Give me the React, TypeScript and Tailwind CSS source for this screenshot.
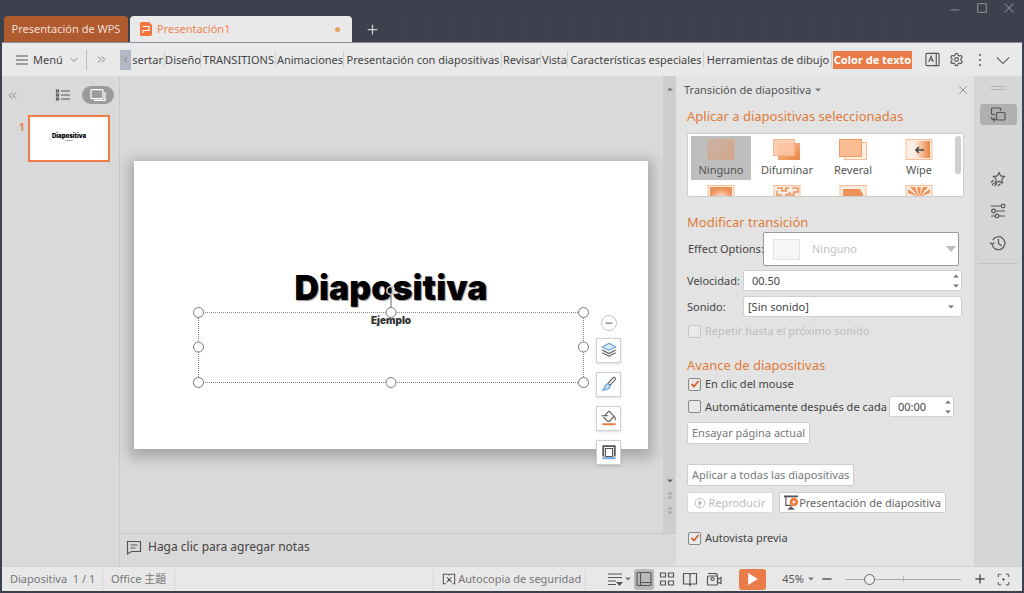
import { useState } from 'react';
import type { ReactNode } from 'react';
import { ChevronDown, ChevronLeft, ChevronsLeft, ChevronsRight, Minus, Plus, Settings, X } from 'lucide-react';

// ========================================
// DATA
// ========================================

interface MenuTab {
  label: string;
  width: string;
}

const menuTabs: MenuTab[] = [
  { label: 'Diseño', width: 'w-9' },
  { label: 'TRANSITIONS', width: 'w-[75px]' },
  { label: 'Animaciones', width: 'w-[68px]' },
  { label: 'Presentación con diapositivas', width: 'w-[158px]' },
  { label: 'Revisar', width: 'w-[39px]' },
  { label: 'Vista', width: 'w-[27px]' },
  { label: 'Características especiales', width: 'w-[136px]' },
  { label: 'Herramientas de dibujo', width: 'w-[128px]' },
];

const transitions = ['Ninguno', 'Difuminar', 'Reveral', 'Wipe'];

// ========================================
// ICONS
// ========================================

interface IconProps {
  children: ReactNode;
  size?: string;
  box?: string;
  color?: string;
}

function Icon({ children, size = 'size-4', box = '0 0 16 16', color = 'text-[#555]' }: IconProps) {
  return (
    <svg viewBox={box} className={`${size} ${color} shrink-0`} fill="none" stroke="currentColor" strokeWidth="1.2" aria-hidden="true">
      {children}
    </svg>
  );
}

function Caret({ up = false, color = 'text-[#777]' }: { up?: boolean; color?: string }) {
  return (
    <svg viewBox="0 0 6 4" className={`h-1 w-1.5 shrink-0 ${color}`} fill="currentColor" aria-hidden="true">
      <path d={up ? 'M0 3.500 3 .5l3 3z' : 'M0 .5h6l-3 3z'} />
    </svg>
  );
}

function TransitionIcon({ name }: { name: string }) {
  return (
    <svg viewBox="0 0 28 22" className="h-[22px] w-7" fill="none" aria-hidden="true">
      <defs>
        <linearGradient id="warm" x1="0" x2="1" y1="0" y2="1">
          <stop offset="0" stopColor="#fbc4a0" />
          <stop offset="1" stopColor="#e98442" />
        </linearGradient>
        <linearGradient id="wipe">
          <stop offset=".3" stopColor="#fdeee4" />
          <stop offset="1" stopColor="#ea8443" />
        </linearGradient>
        <linearGradient id="muted" x1="0" x2="1" y1="0" y2="1">
          <stop offset="0" stopColor="#c9b5a7" />
          <stop offset="1" stopColor="#d3a488" />
        </linearGradient>
      </defs>
      {name === 'Ninguno' && <rect x="1" y=".5" width="26" height="20" fill="url(#muted)" stroke="#dba685" strokeDasharray="2 1" />}
      {name === 'Difuminar' && (
        <>
          <rect x="5" y="4" width="22" height="17" fill="url(#warm)" />
          <rect x=".5" y=".5" width="21" height="16" fill="#fbc7a6" fillOpacity=".85" stroke="#f4b48d" />
        </>
      )}
      {name === 'Reveral' && (
        <>
          <rect x="5.5" y="3.5" width="22" height="17" fill="#fdeee4" stroke="#f8bd97" />
          <rect x=".5" y=".5" width="22" height="17" fill="#fbbc93" stroke="#f09a66" />
        </>
      )}
      {name === 'Wipe' && (
        <>
          <rect x="1" y=".5" width="26" height="20" fill="#fdeee4" stroke="#f8bd97" />
          <rect x="3" y="2" width="22" height="17" fill="url(#wipe)" />
          <path d="M19 11h-8m3-3-3 3 3 3" stroke="#444" strokeWidth="1.6" />
        </>
      )}
    </svg>
  );
}

function HiddenRowIcon({ index }: { index: number }) {
  return (
    <svg viewBox="0 0 28 22" className="h-[22px] w-7" fill="none" aria-hidden="true">
      <defs>
        <radialGradient id="glow" cy=".6">
          <stop offset="0" stopColor="#fde3d2" />
          <stop offset="1" stopColor="#ee9158" />
        </radialGradient>
      </defs>
      <rect x="1" y=".5" width="26" height="20" fill="#fdeee4" stroke="#f8bd97" />
      {index === 0 && <rect x="3" y="2" width="22" height="17" fill="url(#glow)" />}
      {index === 1 && <path d="M4 3h5v3h4V3h3m3 0h6v4h-4v3h-4V7M4 6v4h5m3 0h3V8" stroke="#ee9158" strokeWidth="1.5" />}
      {index === 2 && <path d="M4 4h17l3 5v10H4z" fill="#ee9158" />}
      {index === 3 && <path d="M14 12 3 8V4zM14 12 5 2h5zM14 12 12 2h4zM14 12 18 2h5zM14 12l11-8v4z" fill="#ee9158" />}
    </svg>
  );
}

// ========================================
// SHARED CONTROLS
// ========================================

interface CheckProps {
  id: string;
  label: string;
  defaultChecked?: boolean;
  disabled?: boolean;
}

function Check({ id, label, defaultChecked, disabled }: CheckProps) {
  return (
    <div className="flex h-5 items-center gap-1 pl-px whitespace-nowrap">
      <span className="grid place-items-center">
        <input
          id={id}
          type="checkbox"
          defaultChecked={defaultChecked}
          disabled={disabled}
          className="peer col-start-1 row-start-1 size-[13px] appearance-none rounded-xs border border-[#888] bg-[#e9e9e9] disabled:border-[#c5c5c5]"
        />
        <svg viewBox="0 0 10 10" className="pointer-events-none invisible col-start-1 row-start-1 size-2.5 peer-checked:visible" fill="none" stroke="#d4602a" strokeWidth="1.8" aria-hidden="true">
          <path d="m1.5 5 2.5 2.5L8.5 2" />
        </svg>
      </span>
      <label htmlFor={id} className={disabled ? 'text-[#bcbcbc]' : ''}>{label}</label>
    </div>
  );
}

function Spinner({ id, label, value, width }: { id: string; label: string; value: string; width: string }) {
  return (
    <div className={`flex h-[21px] items-center rounded-xs border border-[#cfcfcf] bg-white ${width}`}>
      <input id={id} aria-label={label} defaultValue={value} className="w-0 min-w-0 grow pl-2 outline-none" />
      <div className="flex w-2 flex-col gap-1.5">
        <button type="button" aria-label={`${label}: más`}><Caret up /></button>
        <button type="button" aria-label={`${label}: menos`}><Caret /></button>
      </div>
    </div>
  );
}

function PanelHeading({ children }: { children: ReactNode }) {
  return <h2 className="text-[13px] leading-5 text-[#e07b39]">{children}</h2>;
}

// ========================================
// WINDOW PARTS
// ========================================

function TitleBar() {
  return (
    <header className="flex h-[43px] items-end border-b border-[#8a8a9c] pl-0.5">
      <button type="button" className="h-[26px] w-[124px] rounded-t bg-[#b05a30] text-[#f0dfd6]">Presentación de WPS</button>
      <button type="button" className="ml-0.5 flex h-[26px] w-[222px] items-center gap-1 rounded-t bg-[#e9e9e9] pr-3 pl-[9px] text-[#ef8450]">
        <svg viewBox="0 0 14 16" className="h-4 w-3.5" fill="none" aria-hidden="true">
          <path d="M2.5 1H10l3 3v9a2 2 0 0 1-2 2H2.5A1.5 1.5 0 0 1 1 13.500v-11A1.500 1.500 0 0 1 2.500 1z" fill="#f2743d" />
          <path d="M3.500 5.500h6.500v4H4v2.500" stroke="#fff" strokeWidth="1.200" />
        </svg>
        <span className="grow text-left">Presentación1</span>
        <span className="size-[5px] rounded-full bg-[#e8a05a]" />
      </button>
      <button type="button" aria-label="Nueva pestaña" className="grid h-[26px] w-10 place-items-center text-[#d0d0d6]">
        <Plus size={15} strokeWidth={2} />
      </button>
      <div className="h-[30px] grow bg-[radial-gradient(#444753_0.5px,transparent_1px)] bg-[length:6px_10px]" />
      <div className="flex h-full items-start gap-[17px] pt-[3px] pr-2 pl-4 text-[#85858e]">
        <button type="button" aria-label="Minimizar"><Icon size="size-2.5" color=""><path d="M1 11h14" strokeWidth="1.800" /></Icon></button>
        <button type="button" aria-label="Maximizar"><Icon size="size-2.5" color=""><rect x="1" y="1" width="14" height="14" rx="1.500" strokeWidth="1.800" /></Icon></button>
        <button type="button" aria-label="Cerrar"><Icon size="size-2.5" color=""><path d="m1 1 14 14M15 1 1 15" strokeWidth="1.800" /></Icon></button>
      </div>
    </header>
  );
}

function MenuBar() {
  return (
    <nav className="flex h-[33px] items-center bg-[#e9e9e9] whitespace-nowrap">
      <button type="button" className="flex w-[84px] items-center gap-1 pl-[13px]">
        <Icon size="h-3 w-[14px]" box="0 0 14 12"><path d="M1 2h12M1 6h12M1 10h12" /></Icon>
        <span>Menú</span>
        <ChevronDown size={12} strokeWidth={1.800} className="ml-px text-[#777]" />
      </button>
      <button type="button" aria-label="Más accesos" className="flex h-5 w-[34px] items-center border-l border-[#bbb] pl-2 text-[#777]">
        <ChevronsRight size={13} strokeWidth={1.800} />
      </button>
      <button type="button" aria-label="Desplazar a la izquierda" className="grid h-5 w-[11px] place-items-center bg-[#b4b7c4] text-[#666]">
        <ChevronLeft size={9} />
      </button>
      <button type="button" className="ml-px flex h-[17px] w-[33px] items-center justify-end overflow-hidden border-r border-[#d0d0d0] pr-px">
        <span>Insertar</span>
      </button>
      {menuTabs.map((tab) => (
        <button key={tab.label} type="button" className={`flex h-[17px] items-center justify-center border-r border-[#d0d0d0] pl-px ${tab.width}`}>
          {tab.label}
        </button>
      ))}
      <button type="button" className="ml-px h-[18px] w-[79px] bg-[#e97c49] font-bold text-white">Color de texto</button>
      <div className="ml-auto flex items-center pr-3">
        <button type="button" aria-label="Panel de texto" className="mr-[9px]">
          <Icon size="size-[15px]">
            <rect x="1" y="1.500" width="14" height="13" rx="1" />
            <path d="M12 1.500v13M4 10.500l2.500-6 2.500 6M5 8.500h3" />
          </Icon>
        </button>
        <button type="button" aria-label="Configuración" className="mr-3.5 text-[#555]"><Settings size={15} strokeWidth={1.800} /></button>
        <button type="button" aria-label="Más" className="mr-3.5">
          <svg viewBox="0 0 4 14" className="h-3.5 w-1" fill="#555" aria-hidden="true">
            <circle cx="2" cy="2" r="1" /><circle cx="2" cy="7" r="1" /><circle cx="2" cy="12" r="1" />
          </svg>
        </button>
        <button type="button" aria-label="Ocultar cinta"><Icon size="size-3.5"><path d="m1 5 7 7 7-7" /></Icon></button>
      </div>
    </nav>
  );
}

function SlideList() {
  return (
    <aside className="w-[118px] shrink-0 border-r border-[#c9c9c9] bg-[#d9d9d9]">
      <div className="mt-2.5 flex items-center pl-1">
        <button type="button" aria-label="Contraer" className="text-[#777]"><ChevronsLeft size={13} strokeWidth={1.800} /></button>
        <button type="button" aria-label="Esquema" className="ml-9">
          <Icon size="h-3 w-4" box="0 0 16 12">
            <path d="M6 2h9M6 6h9M6 10h9" />
            <path d="M1.500 1h2v2h-2zM1.500 5h2v2h-2zM1.500 9h2v2h-2z" />
          </Icon>
        </button>
        <button type="button" aria-label="Diapositivas" className="ml-[11px] grid h-[18px] w-8 place-items-center rounded-full bg-[#9b9b9b]">
          <Icon size="h-3 w-4" box="0 0 16 12" color="text-white">
            <rect x="1" y=".6" width="12" height="9" rx="1" />
            <path d="M15 3v8.400H4" />
          </Icon>
        </button>
      </div>
      <div className="mt-[11px] flex pl-[17px]">
        <span className="w-[9px] pt-1 text-[10px] font-bold text-[#e97c49]">1</span>
        <button type="button" className="h-[47px] w-[82px] border-2 border-[#ee7c48] bg-white pb-1 text-black">
          <span className="block font-[Inter,sans-serif] text-[6px] leading-[7px] font-black">Diapositiva</span>
          <span className="block text-[2px] leading-[3px]">Ejemplo</span>
        </button>
      </div>
    </aside>
  );
}

const handles = [
  '-left-[6px] -top-[6px]',
  'left-1/2 -translate-x-1/2 -top-[6px]',
  '-right-[6px] -top-[6px]',
  '-left-[6px] top-1/2 -translate-y-1/2',
  '-right-[6px] top-1/2 -translate-y-1/2',
  '-left-[6px] -bottom-[6px]',
  'left-1/2 -translate-x-1/2 -bottom-[6px]',
  '-right-[6px] -bottom-[6px]',
];

function FloatingTool({ label, children }: { label: string; children: ReactNode }) {
  return (
    <button type="button" aria-label={label} className="grid size-[25px] place-items-center border border-[#d0d0d0] bg-white shadow">
      <Icon box="0 0 18 18" size="size-4">{children}</Icon>
    </button>
  );
}

function Slide() {
  return (
    <div className="relative aspect-[514/288] w-full bg-white pt-[107px] text-center text-black shadow-[0_4px_12px_5px_rgba(0,0,0,0.22)]">
      <h1 className="font-[Inter,sans-serif] text-[34px] leading-10 font-black text-shadow-[1px_1px_1px_#999]">Diapositiva</h1>
      <p className="mt-1.5 font-[Inter,sans-serif] text-[10px] leading-3 font-black text-[#333]">Ejemplo</p>

      {/* Selected text box */}
      <div className="absolute inset-x-16 top-[151px] bottom-[66px] border border-dotted border-[#888]">
        <svg viewBox="0 0 12 28" className="absolute bottom-full left-1/2 h-7 w-3 -translate-x-1/2" fill="none" aria-hidden="true">
          <path d="M6 9v19" stroke="#999" strokeWidth="1.500" />
          <path d="M9.500 7A4 4 0 1 1 9.500 4" stroke="#ccc" strokeWidth="1.600" />
          <path d="M8 6h4l-2 3z" fill="#ddd" />
        </svg>
        {handles.map((place) => (
          <span key={place} className={`absolute size-[11px] rounded-full border border-[#777] bg-white ${place}`} />
        ))}
      </div>

      {/* Quick tools beside the selection */}
      <div className="absolute top-[154px] right-[27px] flex flex-col items-center gap-[9px]">
        <button type="button" aria-label="Contraer herramientas" className="-mb-0.5 grid size-4 place-items-center rounded-full border border-[#c4c4c4] bg-white text-[#777]">
          <Minus size={10} strokeWidth={3} />
        </button>
        <FloatingTool label="Capas">
          <path d="m1.500 12 7.500 4 7.500-4" />
          <path d="m1.500 9 7.500 4 7.500-4" />
          <path d="M9 1.500 16.500 5.500 9 9.500 1.500 5.500z" fill="#d5e9f8" stroke="#5b9bd5" />
        </FloatingTool>
        <FloatingTool label="Pincel">
          <path d="M15.500 1.500c1 .8 1 1.800.3 2.700l-5.500 6.300-2.500-2L13.500 2c.6-.6 1.400-.8 2-.5z" />
          <path d="m7.800 8.500 2.500 2.200c0 3-3.500 5.300-8.300 5 2-1.200 1.800-2 2.500-4.200.7-1.800 1.800-2.800 3.300-3z" fill="#c5e0f5" stroke="#5b9bd5" />
        </FloatingTool>
        <FloatingTool label="Relleno">
          <path d="m4 6.500 4-4.500q1-1 2 0l4.500 5-4 5q-.5.500-1 .5h-2q-.5 0-1-.5L3 8M.5 6.500H8M14.500 7c1.500 1 1.800 2.500 1.500 4.500" />
          <path d="M1.500 16h15" stroke="#f07a3c" strokeWidth="2.200" />
        </FloatingTool>
        <FloatingTool label="Contorno">
          <path d="M2.500 14V2.500h13V14" strokeWidth="2" />
          <path d="M5 14V5h8v9z" />
          <path d="M1.500 16h15" stroke="#6fa5d8" strokeWidth="2.200" />
        </FloatingTool>
      </div>
    </div>
  );
}

function Canvas() {
  return (
    <main className="flex min-w-0 grow flex-col bg-[#d9d9d9]">
      <div className="flex grow">
        <div className="flex min-w-0 grow items-center pr-[15px] pl-3.5">
          <Slide />
        </div>
        <div className="flex w-[13px] shrink-0 flex-col items-center bg-[#cecece] pt-[11px] pb-[18px]">
          <Caret up />
          <div className="mt-auto flex flex-col items-center gap-2">
            <Caret color="text-[#666]" />
            <span className="flex flex-col"><Caret up color="text-[#aaa]" /><Caret up color="text-[#aaa]" /></span>
            <span className="flex flex-col"><Caret color="text-[#aaa]" /><Caret color="text-[#aaa]" /></span>
          </div>
        </div>
      </div>
      <button type="button" className="flex h-[33px] items-center gap-1.5 border-t border-[#c6c6c6] pb-1.5 pl-1.5 text-xs">
        <Icon>
          <path d="M1.500 2.500h13v10h-9l-4 2.500z" />
          <path d="M4.500 6h7M4.500 9h5" />
        </Icon>
        Haga clic para agregar notas
      </button>
    </main>
  );
}

function TransitionPanel() {
  const [selected, setSelected] = useState('Ninguno');

  return (
    <section className="w-[298px] shrink-0 bg-[#e3e3e3] pr-2.5 pl-[11px]">
      <div className="flex h-7 items-center justify-between text-[#555]">
        <button type="button" className="-ml-[3px] flex items-center gap-1">Transición de diapositiva <Caret /></button>
        <button type="button" aria-label="Cerrar panel" className="-mr-1.5 text-[#888]"><X size={14} strokeWidth={1.500} /></button>
      </div>

      <div className="mt-0.5"><PanelHeading>Aplicar a diapositivas seleccionadas</PanelHeading></div>
      <div className="mt-[7px] flex h-16 overflow-hidden rounded-xs border border-[#ccc] bg-white">
        <div className="grid grow grid-cols-4 content-start pt-0.5 pl-[3px]">
          {transitions.map((name) => (
            <button
              key={name}
              type="button"
              onClick={() => setSelected(name)}
              className={`mr-1.5 flex h-11 flex-col items-center pt-[3px] leading-[18px] text-[#555] ${selected === name ? 'bg-[#bebebe]' : ''}`}
            >
              <TransitionIcon name={name} />
              {name}
            </button>
          ))}
          {transitions.map((name, index) => (
            <span key={name} className="mr-1.5 flex justify-center pt-[5px]"><HiddenRowIcon index={index} /></span>
          ))}
        </div>
        <span className="mt-0.5 mr-0.5 h-[38px] w-1.5 rounded-full bg-[#cfcfcf]" />
      </div>

      <div className="mt-[15px]"><PanelHeading>Modificar transición</PanelHeading></div>
      <div className="flex items-center pr-[5px]">
        <span id="effect-label" className="w-[76px] shrink-0 pl-px whitespace-nowrap">Effect Options:</span>
        <button type="button" aria-labelledby="effect-label" disabled className="flex h-[34px] grow items-center rounded-xs border border-[#999] bg-white pr-0.5 pl-[9px] text-[#c2c2c2]">
          <span className="mr-3 h-[21px] w-[27px] border border-[#e3e3e3] bg-[#f6f6f6]" />
          <span className="grow text-left">Ninguno</span>
          <svg viewBox="0 0 10 6" className="h-1.5 w-2.5" fill="#bbb" aria-hidden="true"><path d="M0 0h10L5 6z" /></svg>
        </button>
      </div>
      <div className="mt-1 flex items-center pr-0.5">
        <label htmlFor="speed" className="w-14 shrink-0">Velocidad:</label>
        <Spinner id="speed" label="Velocidad" value="00.50" width="grow" />
      </div>
      <div className="mt-[5px] flex items-center pr-0.5">
        <label htmlFor="sound" className="w-14 shrink-0">Sonido:</label>
        <div className="grid grow items-center">
          <select id="sound" className="col-start-1 row-start-1 h-[21px] appearance-none rounded-[3px] border border-[#cfcfcf] bg-white pl-1">
            <option>[Sin sonido]</option>
          </select>
          <span className="pointer-events-none col-start-1 row-start-1 justify-self-end pr-2"><Caret /></span>
        </div>
      </div>
      <div className="mt-1"><Check id="repeat" label="Repetir hasta el próximo sonido" disabled /></div>

      <div className="mt-[14px]"><PanelHeading>Avance de diapositivas</PanelHeading></div>
      <div className="-mt-px"><Check id="on-click" label="En clic del mouse" defaultChecked /></div>
      <div className="mt-0.5 flex items-center justify-between pr-2.5">
        <Check id="auto" label="Automáticamente después de cada" />
        <Spinner id="after" label="Tiempo" value="00:00" width="w-[65px]" />
      </div>
      <button type="button" className="mt-[5px] block h-[22px] rounded-xs border border-[#ccc] bg-white px-1 text-[#777]">Ensayar página actual</button>

      <button type="button" className="mt-5 block h-[22px] rounded-xs border border-[#ccc] bg-white px-1 text-[#777]">Aplicar a todas las diapositivas</button>
      <div className="mt-1.5 flex gap-1.5 whitespace-nowrap">
        <button type="button" disabled className="flex h-[21px] w-[86px] items-center justify-center gap-0.5 rounded-xs border border-[#d8d8d8] bg-white text-[#bbb]">
          <Icon size="size-3" color="text-[#bbb]">
            <circle cx="8" cy="8" r="6.500" />
            <path d="M6.500 5v6l4-3z" fill="currentColor" />
          </Icon>
          Reproducir
        </button>
        <button type="button" className="flex h-[21px] w-[167px] items-center justify-center rounded-xs border border-[#ccc] bg-white text-[#666]">
          <Icon size="size-[15px]">
            <path d="M0 1.500h15" strokeWidth="2" />
            <path d="M2 2v9h6" />
            <path d="m5 15 2.500-2.500L10 15z" fill="currentColor" />
            <circle cx="10.500" cy="7.500" r="3" stroke="#f07a3c" strokeWidth="3" />
          </Icon>
          Presentación de diapositiva
        </button>
      </div>
      <div className="mt-[15px]"><Check id="preview" label="Autovista previa" defaultChecked /></div>
    </section>
  );
}

function ToolRail() {
  return (
    <aside className="flex w-12 shrink-0 flex-col items-center bg-[#d6d6d6] px-1 pt-2.5">
      <span className="h-1 w-3.5 border-y border-[#b5b5b5]" />
      <button type="button" aria-label="Transición" className="mt-3.5 grid h-[21px] w-[37px] place-items-center rounded-[3px] bg-[#b0b0b0]">
        <Icon>
          <path d="M10.500 4V2a1 1 0 0 0-1-1h-7a1 1 0 0 0-1 1v4.500a1 1 0 0 0 1 1H5" />
          <rect x="6.500" y="5.500" width="8.500" height="7.500" rx="1" />
          <path d="M1 10c0 2 1.500 2.700 4 2.700M3.200 10.700l2 2-2 2" />
        </Icon>
      </button>
      <div className="mt-[46px] flex w-full flex-col items-center gap-4 border-b border-[#c2c2c2] pb-3">
        <button type="button" aria-label="Animación">
          <Icon>
            <path d="m9 1.500 1.700 3.400 3.800.6-2.700 2.700.6 3.800L9 10.200l-3.400 1.800.6-3.800-2.700-2.700 3.800-.6z" />
            <path d="m3.500 9-2.500 2.500m3.500 0L2 14m5-1.500L4.500 15m6-2.500L8 15" />
          </Icon>
        </button>
        <button type="button" aria-label="Ajustes">
          <Icon>
            <path d="M1 3h10M5 8h10M1 13h4M9 13h6M1 8h1" />
            <circle cx="13" cy="3" r="1.800" /><circle cx="3.500" cy="8" r="1.800" /><circle cx="7" cy="13" r="1.800" />
          </Icon>
        </button>
        <button type="button" aria-label="Historial">
          <Icon>
            <path d="M2 9a6.500 6.500 0 1 0 .8-4M0 7.500 2 9.500l2.200-2M8.500 4v4.500L12 11" />
          </Icon>
        </button>
      </div>
    </aside>
  );
}

function StatusBar() {
  return (
    <footer className="flex h-[25px] items-center border-t border-[#d3d3d3] bg-[#e8e8e8] pr-3 pl-2 whitespace-nowrap text-[#777]">
      <span className="flex h-[21px] w-[93px] items-center border-r border-[#d8d8d8] whitespace-pre">Diapositiva  1 / 1</span>
      <span className="flex h-[21px] items-center border-r border-[#d8d8d8] px-2">Office 主題</span>
      <button type="button" className="ml-auto flex h-[21px] w-[153px] items-center gap-0.5 border-x border-[#d8d8d8] pl-2">
        <Icon size="size-3.5">
          <path d="M5 13.500H1.500v-11H7l1 1 1-1h5.500v11H12M5.500 6l5.500 5.500M11 6l-5.500 5.500" />
        </Icon>
        Autocopia de seguridad
      </button>
      <div className="flex items-center pl-[21px]">
        <button type="button" aria-label="Notas" className="flex w-[27px] items-center gap-0.5">
          <Icon><path d="M1 3h14M1 6.500h14M1 10h8M1 13.500h8" /><path d="M9 11h7l-3.500 4z" fill="currentColor" stroke="none" /></Icon>
          <Caret />
        </button>
        <button type="button" aria-label="Vista normal" className="grid h-[21px] w-5 place-items-center rounded-[3px] bg-[#b9b9b9]">
          <Icon><rect x="1" y="1.500" width="14" height="13" rx="1" /><path d="M4.500 1.500v13M4.500 11.500H15" /></Icon>
        </button>
        <button type="button" aria-label="Clasificador" className="ml-[5px]">
          <Icon><path d="M1.500 2h5v4h-5zM9.500 2h5v4h-5zM1.500 10h5v4h-5zM9.500 10h5v4h-5z" /></Icon>
        </button>
        <button type="button" aria-label="Vista de lectura" className="ml-[7px]">
          <Icon><path d="M1.500 2.500H7l1 1 1-1h5.500v10.500H9l-1 1.500L7 13H1.500zM8 3.500v11" /></Icon>
        </button>
        <button type="button" aria-label="Grabar" className="ml-2">
          <Icon>
            <rect x="1.500" y="5" width="10" height="9" rx="1" />
            <path d="M11.500 8.500 15 6.500v6l-3.500-1.500M2 2.500h8l2 2" />
            <circle cx="6.500" cy="8" r="1.500" />
          </Icon>
        </button>
        <button type="button" aria-label="Presentar" className="ml-[17px] grid h-[21px] w-[27px] place-items-center rounded-[3px] bg-[#e97c49]">
          <svg viewBox="0 0 8 10" className="h-3 w-2.5" fill="#fff" aria-hidden="true"><path d="M0 0v10l8-5z" /></svg>
        </button>
        <button type="button" className="ml-4 flex items-center gap-1 text-[#555]">45% <Caret /></button>
        <button type="button" aria-label="Alejar" className="ml-1.5 text-[#555]"><Minus size={14} strokeWidth={2.500} /></button>
        <span className="ml-3 grid w-[115px] items-center">
          <span className="col-start-1 row-start-1 h-1.5 w-px justify-self-center bg-[#bbb]" />
          <input
            type="range"
            aria-label="Zoom"
            min="0"
            max="100"
            defaultValue="17"
            className="relative col-start-1 row-start-1 h-3 w-full appearance-none bg-transparent [&::-webkit-slider-runnable-track]:h-px [&::-webkit-slider-runnable-track]:bg-[#aaa] [&::-webkit-slider-thumb]:-mt-[5px] [&::-webkit-slider-thumb]:size-[11px] [&::-webkit-slider-thumb]:appearance-none [&::-webkit-slider-thumb]:rounded-full [&::-webkit-slider-thumb]:border [&::-webkit-slider-thumb]:border-[#666] [&::-webkit-slider-thumb]:bg-[#eee]"
          />
        </span>
        <button type="button" aria-label="Acercar" className="ml-3 text-[#555]"><Plus size={14} strokeWidth={2.500} /></button>
        <button type="button" aria-label="Ajustar" className="ml-2.5">
          <Icon size="size-[13px]">
            <path d="M1.500 5V1.500H5M11 1.500h3.500V5M14.500 11v3.500H11M5 14.500H1.500V11" />
            <circle cx="8" cy="8" r="1" fill="currentColor" />
          </Icon>
        </button>
      </div>
    </footer>
  );
}

// ========================================
// APP
// ========================================

export default function App() {
  return (
    <div className="flex min-h-screen flex-col bg-[#3d404d] px-0.5 pb-0.5 font-['Noto_Sans','Noto_Sans_CJK_TC',sans-serif] text-[11px] leading-4 text-[#444]">
      <TitleBar />
      <MenuBar />
      <div className="flex grow">
        <SlideList />
        <Canvas />
        <TransitionPanel />
        <ToolRail />
      </div>
      <StatusBar />
    </div>
  );
}
